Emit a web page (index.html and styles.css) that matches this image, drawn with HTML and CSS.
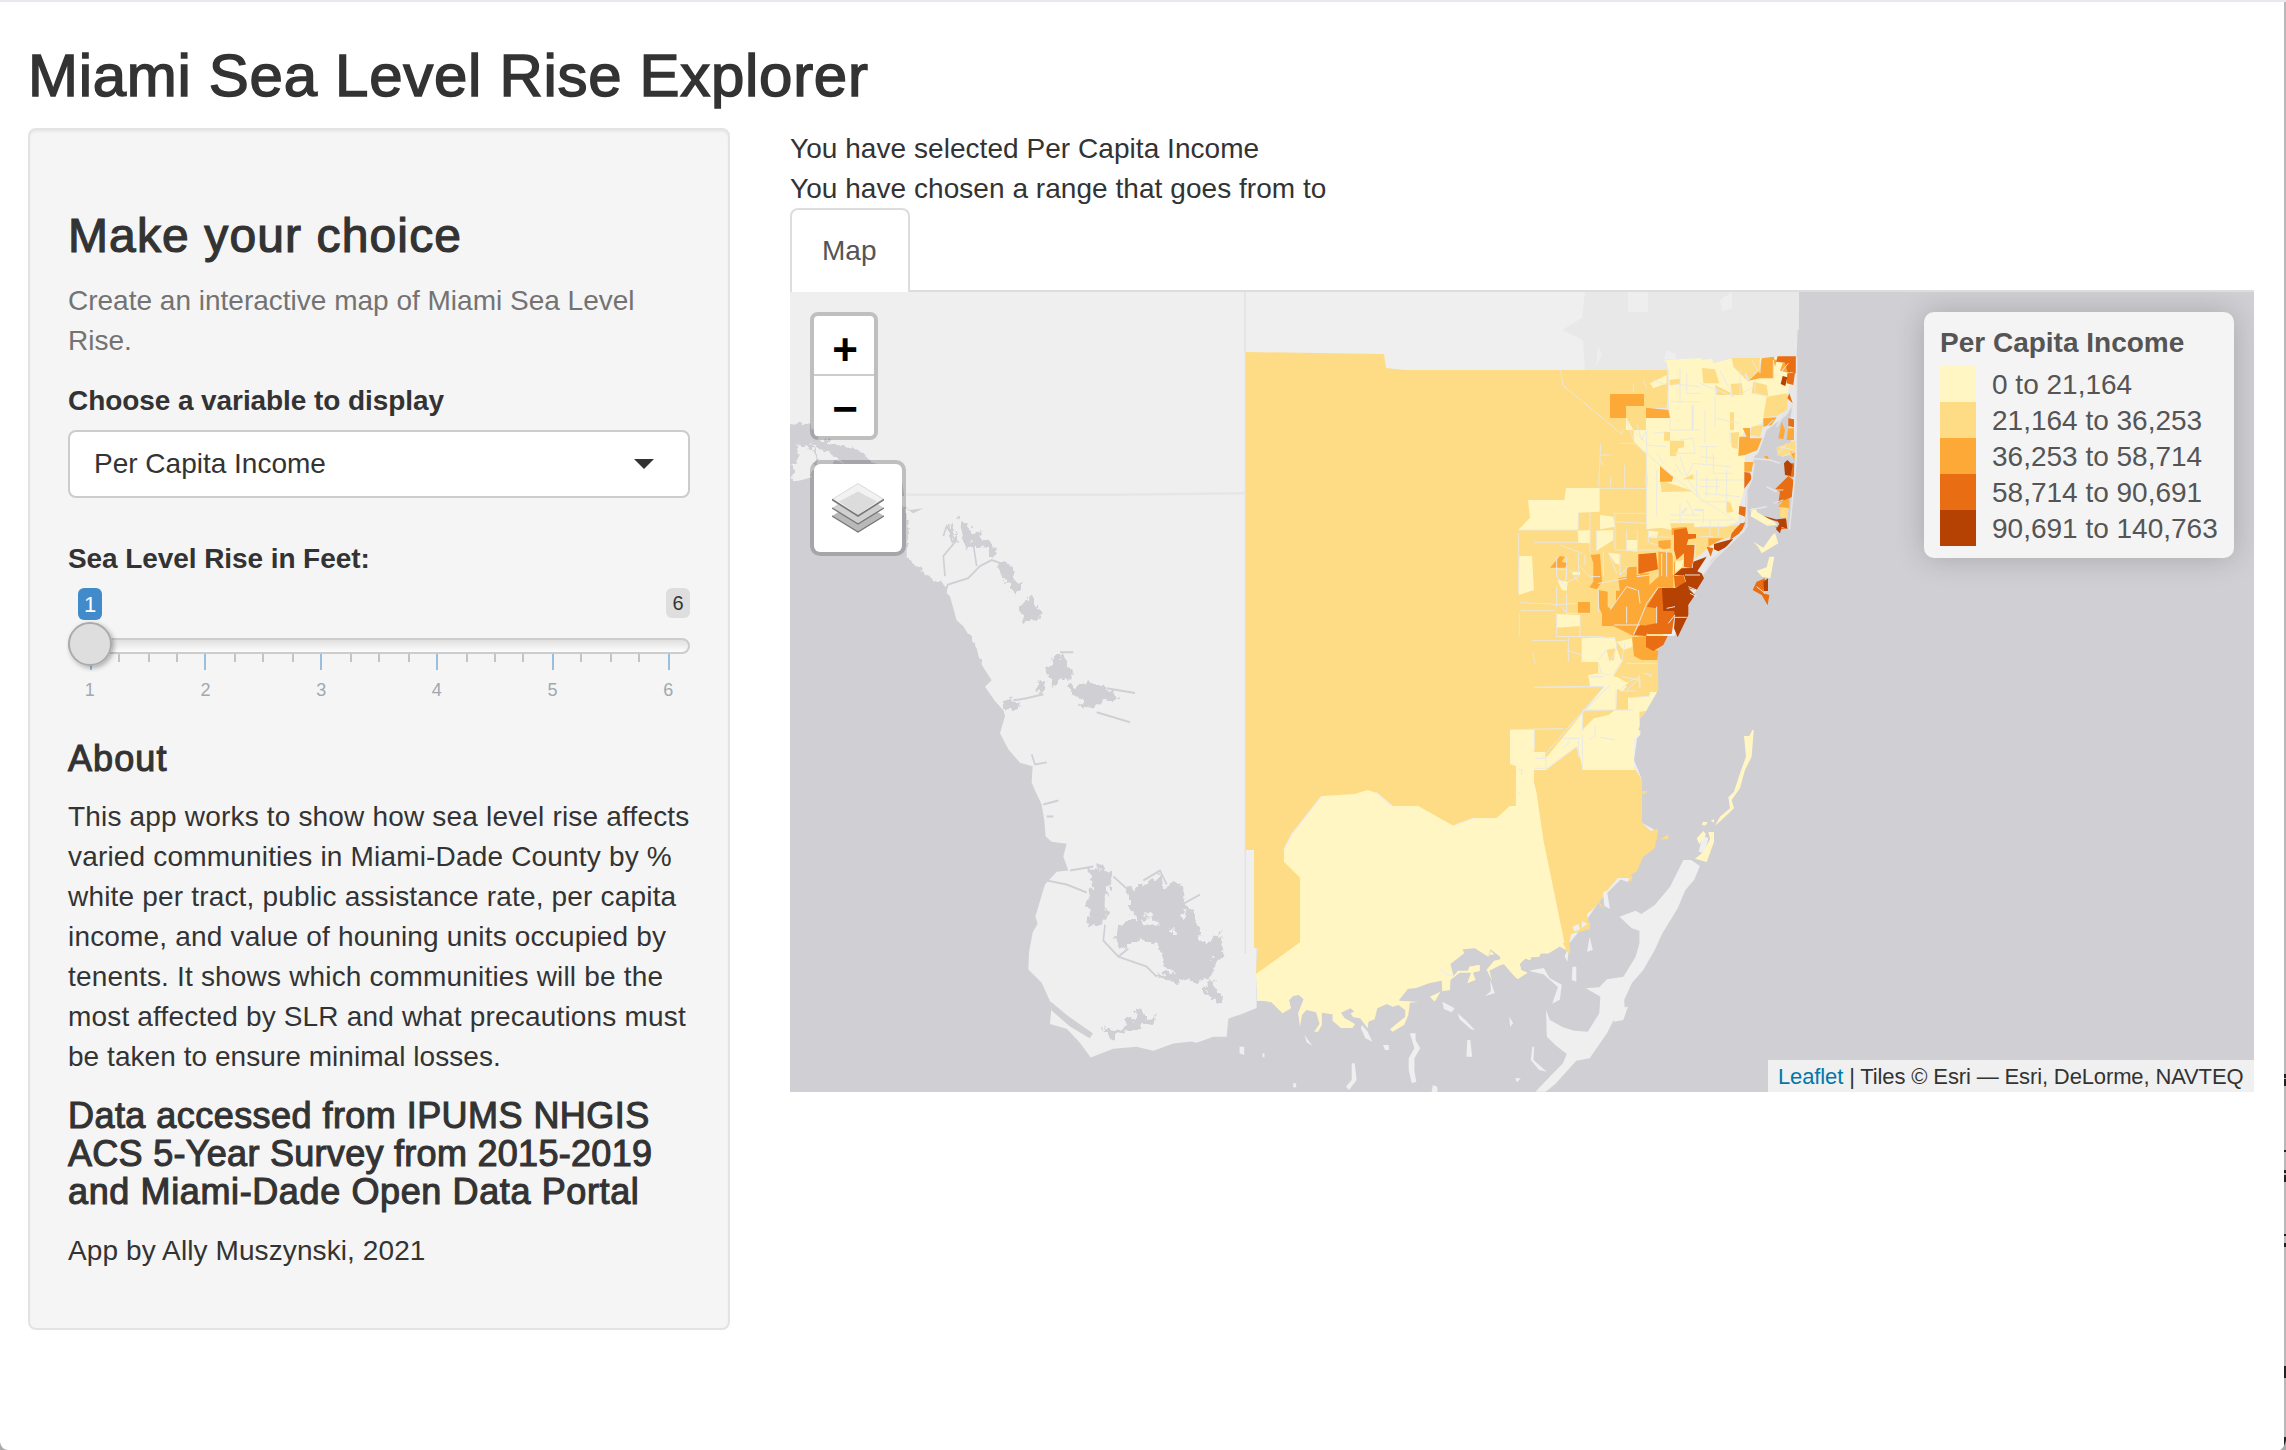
FILE: index.html
```html
<!DOCTYPE html>
<html lang="en">
<head>
<meta charset="utf-8">
<title>Miami Sea Level Rise Explorer</title>
<link rel="stylesheet" href="styles.css">
</head>
<body>
<div class="page">
  <h1 class="title">Miami Sea Level Rise Explorer</h1>
  <div class="layout">
    <aside class="sidebar">
      <h2 class="choice">Make your choice</h2>
      <p class="help">Create an interactive map of Miami Sea Level<br>Rise.</p>
      <label class="label">Choose a variable to display</label>
      <div class="select">
        <span>Per Capita Income</span>
        <svg class="caret" width="20" height="10" viewBox="0 0 20 10"><path d="M0 0H20L10 10Z"/></svg>
      </div>
      <label class="label label-slider">Sea Level Rise in Feet:</label>
      <div class="slider">
        <div class="badges"><span class="badge badge-from">1</span><span class="badge badge-max">6</span></div>
        <svg class="track" width="626" height="52" viewBox="66 620 626 52">
          <defs>
            <linearGradient id="bar" x1="0" y1="0" x2="0" y2="1"><stop offset="0" stop-color="#dedede"/><stop offset="1" stop-color="#fff"/></linearGradient>
            <filter id="knob" x="-30%" y="-30%" width="170%" height="170%"><feDropShadow dx="2" dy="2" stdDeviation="2.5" flood-opacity=".3"/></filter>
          </defs>
          <rect x="69" y="639" width="620" height="14" rx="7" fill="url(#bar)" stroke="#ccc" stroke-width="2"/>
          <path d="M119 654v8M149 654v8M177 654v8M235 654v8M263 654v8M293 654v8M351 654v8M379 654v8M409 654v8M467 654v8M495 654v8M523 654v8M581 654v8M611 654v8M639 654v8" stroke="#c4c4c4" stroke-width="2"/>
          <path d="M91 654v16M205 654v16M321 654v16M437 654v16M553 654v16M669 654v16" stroke="#98bfe0" stroke-width="2"/>
          <circle cx="90" cy="644" r="21" fill="#dedede" stroke="#ababab" stroke-width="2" filter="url(#knob)"/>
        </svg>
        <div class="ticks"><span>1</span><span>2</span><span>3</span><span>4</span><span>5</span><span>6</span></div>
      </div>
      <h4 class="about">About</h4>
      <p class="text">This app works to show how sea level rise affects<br>varied communities in Miami-Dade County by %<br>white per tract, public assistance rate, per capita<br>income, and value of houning units occupied by<br>tenents. It shows which communities will be the<br>most affected by SLR and what precautions must<br><span class="last">be taken to ensure minimal losses.</span></p>
      <h4 class="data">Data accessed from IPUMS NHGIS<br><span class="tight">ACS 5-Year Survey from 2015-2019</span><br><span class="wide">and Miami-Dade Open Data Portal</span></h4>
      <p class="credit">App by Ally Muszynski, 2021</p>
    </aside>
    <main class="main">
      <div class="line">You have selected Per Capita Income</div>
      <div class="line">You have chosen a range that goes from to</div>
      <div class="tabs"><a class="tab">Map</a></div>
      <div class="map">
        <svg class="tiles" width="1464" height="800" viewBox="790 292 1464 800">
          <defs>
            <filter id="rough" x="-5%" y="-5%" width="110%" height="110%"><feTurbulence type="fractalNoise" baseFrequency=".045" numOctaves="3" seed="4" result="n"/><feDisplacementMap in="SourceGraphic" in2="n" scale="40" xChannelSelector="R" yChannelSelector="G"/></filter>
          </defs>
          <rect x="790" y="292" width="1464" height="800" fill="#d0cfd4"/>
          <!-- mainland -->
          <path fill="#efefef" d="M790 292H1799L1797 440L1780 520L1740 560L1700 600L1657 660L1660 683L1653 705L1640 718L1634 760L1642 780V823L1655 830L1640 860L1620 880L1600 900L1580 930L1568 945L1520 950L1500 940L1450 955L1400 990L1370 1000L1340 1005L1300 1000L1272 1001H1257V500H905L900 470L870 462L850 448L820 443L810 428L790 424Z"/>
          <path fill="#e8e8e8" d="M1585 292H1799L1797 440L1780 520L1740 560L1690 605H1500V372H1585L1583 340L1562 330L1582 318Z"/>
          <path fill="#efefef" d="M1628 292h20v20h-20zM1720 300l12-8v16l-10 4zM1666 350l10 4v8h-12zM1598 345l4 10-6 12z" opacity=".8"/>
          <g transform="translate(880 480) scale(.33333 .40052)">
            <path fill="#efefef" d="M60 40H1130V1318L1080 1335L1060 1340L1045 1345L1040 1390H1000L950 1405L935 1402L880 1407L820 1425L770 1415L700 1420L632 1442L600 1405L560 1370L510 1358L515 1310L485 1255L445 1222L447 1180L458 1130L473 1108L466 1090L495 1010L530 978L565 975L550 940L560 908L515 903L497 890L493 850L485 810L465 775L455 755L458 715L420 706L385 672L360 632L375 590L370 575L345 552L315 516L335 500L300 455L290 420L250 365L230 350L210 290L170 262L120 228L60 200Z"/>
            <g fill="#d0cfd4">
              <g filter="url(#rough)">
                <path d="M240 97l20 5 5 20 30 8 20 25 30 5 10 30-25-2-30-22-30 2-20-25zM355 205l30 5 20 20-8 15 30 18-15 15-25-3-5-20-25-18zM420 320l25-28 20 15 0 15 25 15-15 15-20-8-20 8zM515 440l30-8 10 15 0 20 20 15 0 20-25-10-25 20-25-12zM475 505h15l5 20-15 15zM570 515l60-12 20 10 40 8 25 25-60 10-15 15-25-15-45-15z"/>
                <path d="M620 970h60l15 20-15 60 0 60-50 0-10-50 20-40zM740 1020l70-12 30-25 20 30 50 0 0 40 30 30 20 50 10 30 30-30 25 0 5 50-30 20 0 30-30 20-50-5-60-30-30-60-50-10-50 15-25-20 20-40 40-5-20-40zM830 1235l40-5 45 10-10 15-40-5zM980 1250l20 5 5 20 25 8-5 20-25-5-25-20z"/>
                <path d="M670 1370l50-5 40-20 10-25 25 5 0 20 30-10-5 20-50 15-50 10-25 15z"/>
                <path d="M110 225l50 25 30 20 10 60 15 20 60 50 30 60 0 20-100-90-80-120zM365 545l50 5-20 30-20-8zM200 120l10-8 20 40-10 2z"/>
              </g>
              <path d="M512 1302l50 35 77 45-10 12-60-30-55-40z"/>
              <g fill="#efefef" filter="url(#rough)"><path d="M780 1090l40 0 10 20-30 0zM870 1120l20 0 0 20-20 0zM790 1150l30 15-10 10-30-10zM900 1090l10-20 10 30z"/></g>
              <path fill="none" stroke="#d0cfd4" stroke-width="5" d="M230 150L190 190L195 240M200 262L265 245L300 215L335 200L370 210M280 160L290 215M400 550L440 545L490 535M190 140L200 115L225 150M680 520L765 532M650 580L690 590L750 605M540 430H580M455 685L465 710L500 705M490 810L535 800M500 1000L560 1010L620 1030M570 975L640 965M700 990L740 1020M660 1090L625 1115M675 1110L670 1150L715 1190L800 1215L830 1240M715 1190L745 1170M905 1060L960 1035M790 1000L840 975L860 1010M500 840H520"/>
            </g>
            <path fill="none" stroke="#e6e6e6" stroke-width="6" d="M78 37H700L1098 33"/>
          </g>
          <g transform="translate(780 120) scale(.33333)" fill="#d0cfd4">
            <path filter="url(#rough)" d="M30 915l60-5 20 45 60 20 60 10 40 30 20 60 0 50-260-45 0-60 30-40-30-10z"/>
            <path fill="#efefef" filter="url(#rough)" d="M50 975l40 10 20 40-20 60-50-10-5-40 25-10zM90 970l60 30 50 30H120z"/>
            <path d="M30 1090L100 1070L380 1180L380 1330L30 1340ZM370 1160l20 10 40-5-30 15z"/>
            <path filter="url(#rough)" d="M30 1150H370L385 1250L370 1310L400 1330L430 1370L500 1410L490 1440H30Z"/>
            <path d="M30 1150H330V1600H30Z"/>
            <path fill="none" stroke="#e3e3e3" stroke-width="5" d="M1395 516V700M1396 700V2500"/>
          </g>
          <!-- keys -->
          <g transform="translate(1230 780) scale(.38265 .33333)">
            <g fill="#efefef">
              <path d="M1185 240L1205 240L1228 258L1213 300L1190 330L1170 385L1130 460L1110 510L1080 570L1050 610L1030 660L1032 690L1005 715L985 760L940 835L905 842L850 912L825 935H798L840 885L870 850L880 822L850 795L828 770L826 690L836 720L870 742L900 752L935 755L965 700L968 650L930 625L965 622L985 598L1028 590L1060 530L1070 490L1070 452L1050 445L1018 410L1060 392L1075 402L1110 375L1150 320Z"/>
              <path d="M555 665l32 20-8 12-20-10zM345 735l15 20 12 30-18-10-12-30zM470 760l15 0 0 20 12 25-15 30 0 40 5 30-12 5-8-40 0-35 15-30zM780 572l40-8 15 30 32 20-5 45-20 12 15-50-38-38zM895 560h10v45l-12-5zM870 520l15-10-3 35zM680 600l12 40-25 8 15-15zM620 780l8 0 5 50-15 0zM730 710l10 20-8 10zM25 800h12v25l-12-5zM318 850l8 0 5 50-20 30-8-10 15-20zM790 800l5 0-2 40 35 35-20-5-22-30zM400 795h15v15h-10zM195 765l20 32-15-10zM940 470l8 40-15 5zM595 700l20 20 25 30-10-2-30-30zM1235 165l15 10-10 45-15-5zM530 915l12 5 0 16h-15zM745 895l15 0-10 12zM85 820h5v12h-5zM165 910h8v12h-8zM1000 690l40-10-12 40-25 5z"/>
            </g>
          </g>
          <!-- county base -->
          <path fill="#fddc85" d="M1246 352L1384 354L1386 368L1405 370H1634L1690 372V585L1660 640V660L1662 683L1658 693L1653 706L1640 718L1634 740V767L1642 780V823L1651 831L1657 829L1655 848L1643 857L1637 871L1627 878H1618L1605 893L1600 901L1592 910L1587 914L1590 929L1571 934L1568 952L1560 945L1300 970L1256 974L1257.5 948H1254V850H1246Z"/>
          <g transform="translate(1230 780) scale(.38265 .33333)">
            <path fill="#fff6c3" d="M747 0H793L799 28L810 130L878 510L862 500L832 521H812L808 532H788L785 542L772 536L758 552L762 570L778 578L752 598L740 585L716 553L706 556L678 572L685 602L672 572L655 560L635 578L642 600L620 610L630 578H600L576 600L575 630L555 634L553 602L520 610L485 625L465 627L442 662L495 665L470 668L466 705L455 735L425 755L418 748L458 710L458 690L440 675L425 680L410 672L385 685L378 718L362 725L360 745L340 715L322 712L315 700L325 695L315 685L290 698L300 715L327 732L320 744H290L268 722V703L240 698V735L230 755H220L234 732L225 697L200 690L188 705L183 740L178 700L192 658L180 645L165 648L155 660L160 685L137 700L108 667L72 659L68 582L183 487V293L141 245V210L162 163L240 48L325 42L360 30L382 38L423 78H492L585 138L638 114H697L731 78H747Z"/>
            <path fill="#d0cfd4" d="M576 552L612 520L608 508L640 505L675 530L680 508L706 530V538L690 542L670 570L652 572L650 555L625 560L622 572L596 572L584 588ZM442 660L465 627L490 625L552 602V634L520 655L495 665ZM155 660L165 648L180 645L192 658L180 690L160 686ZM758 552L772 536L785 542L788 532H808L812 521H832L862 500L880 515L860 560L800 562L778 576L762 570Z"/>
            <path fill="#fff6c3" d="M625 560l28-5 0 18-20 5zM675 530l6-18 10 12-12 0zM545 565l15 5-3 10zM522 650l28-15-15 30z"/>
            <path fill="none" stroke="#efefef" stroke-width="4" d="M583 138L638 114M141 210L162 163L240 48M382 38L423 78M548 565L560 580L583 588"/>
            <path fill="#efefef" d="M895 440l15-8 5 15-15 8zM920 422l14 10-15 12zM975 335l10-3 8 55-15-10zM1010 294h35l-5 12z"/>
            <path fill="#fddc85" d="M1125 178l20-15v15zM1040 290l12-3-5 22zM962 362l15 22-10-6zM870 490l15-10 5 40-8-5zM890 440l12 18-10-3zM936 425l6 5-4 25zM1078 32l14 3-14 10zM1105 155l14-10-4 40z"/>
          </g>
          <!-- southern tracts and barrier keys -->
          <g transform="translate(1480 660) scale(.33333)">
            <g fill="#fff6c3">
              <path d="M90 210L163 208L162 275H200L195 295L205 285L372 80L412 85L408 150H480L478 160L480 225L462 240V325L470 330H308L300 290L290 260L198 330H162V384L170 400L190 540L108 540V318L90 312ZM372 80L355 78H330L325 45L355 40V5H315L310 0H430L400 50L425 60L440 80L425 95L412 85ZM444 113L508 108L510 96H535L530 120L520 150L480 155L444 150Z"/>
              <path d="M792 228H808L822 200L815 290L795 330L780 385L755 420L762 445L725 480L705 497L720 470L750 445L745 412L762 395L780 340L798 290ZM668 486h15l-5 10h-12zM692 482l10-4v10zM650 535l20-22 8 10-20 30zM685 516h17v30l-22 60-35-10 25-20 20-40z"/>
            </g>
            <path fill="#fddc85" d="M308 152L405 150L385 165L342 175L306 210ZM168 210L250 206L198 290L195 275H162Z"/>
            <path fill="none" stroke="#e8e8e8" stroke-width="3" d="M90 209L250 206M164 210V270M188 292L372 80M308 150V215M310 150H390M307 225V328M198 328L290 260L300 295M408 148V90M345 198V230L330 238M360 232L405 240M165 82L370 79M355 40L395 44M400 50L440 80M425 93H470M360 70L400 58M444 114L508 109M440 90L480 55V85M490 40L515 45M162 325H198V295H165M112 328H125V345M112 400H120M245 235H300M295 240V290M270 245L250 262M480 195V225L465 240"/>
          </g>
          <!-- metro tracts -->
          <g transform="translate(1500 330) scale(.33333)">
            <path fill="#d0cfd4" d="M893 0H960V1200H415L440 1140L475 1080L473 960L500 918L535 918L565 830L610 735L640 680L720 610L735 570L738 480L755 440L762 380L780 330L800 290L860 250L885 200Z"/>
            <path fill="#e8e8e8" d="M498 88L890 76L888 390L865 300L880 220L860 255L800 300L775 370L755 385V440L735 480L732 600L640 685L600 700L440 600V260L505 180Z"/>
            <path fill="#fff6c3" d="M498 90L605 84V90L637 86L640 100L700 84L780 84L885 82L862 195L800 235L785 280L735 300L718 340L735 378L732 480L718 530L715 575L640 600L585 585L440 598L438 370L402 335L400 300H378V264H438L510 262L505 190V120Z"/>
            <path fill="#fddc85" d="M695 84H780V120L742 152L700 110ZM606 114L645 118L658 160L610 160ZM645 165L695 190L692 162L725 160L730 195L650 195ZM760 155L800 165L805 198L755 190ZM800 200L862 190V240L830 258L790 262ZM438 195H503L500 235L440 232ZM378 230H438V300H400L378 262ZM492 306H510V332H492ZM510 332H552V352L535 355L528 378H510ZM690 247H702V300H690ZM692 308L718 306L712 358L695 352ZM480 450L580 484L485 486ZM548 448L580 432V448ZM678 515L692 518L700 545L680 548ZM830 352L885 332V375L832 378ZM755 290L790 285L780 320L750 315ZM508 150L540 146V162L510 166ZM400 120H502V195L435 190L400 160Z"/>
            <path fill="#fddc85" d="M440 598L515 590L520 572L585 580V592L720 590L705 612L640 640L600 675L560 700L490 740L300 740V600ZM840 520L868 510L862 570L840 560ZM865 370h20v20z"/>
            <path fill="#fff6c3" d="M55 600L90 563L84 510H193L198 474H299V545L235 548L233 600ZM58 678H96L102 780L56 795ZM233 602L270 600V640L235 638ZM288 602L340 600V630L290 662ZM300 555L340 560L345 590L300 598ZM380 630H412V665L380 662ZM450 160L500 135V160L460 175ZM325 668L358 672L360 705L345 700ZM172 750L203 755L200 782L185 780ZM170 852L240 855V888L170 893ZM245 925L345 922L350 955L365 995L340 1035L300 1030L295 995H245ZM350 935L398 925V950L370 960ZM272 1035L350 1040L385 1060L360 1080L325 1065L275 1068ZM218 725h22v10h-22zM445 602L475 605L470 625L445 622Z"/>
            <path fill="#fff6c3" d="M515 600L580 590L700 590L580 560L450 585Z"/>
            <path fill="#fddc85" d="M590 600L715 585L690 622L630 640L590 625ZM320 960L345 955L342 990L328 992ZM510 580H582V600H515Z"/>
            <path fill="none" stroke="#e8e8e8" stroke-width="2.600" d="M440 372V590M470 420V560M302 342L296 470M300 375H335M300 390L312 408M332 440V470M374 405V475M300 476H440M182 120L188 165L365 312L370 300M358 340H402L480 405L600 505L720 580M55 600H233M56 610V790M60 818L160 822M62 842H165M58 850V920M95 932H200M98 968L105 1000M102 637H235M180 645L250 672M505 120V190M540 110V220M560 130V190H600M520 162L600 170M510 215H600M645 200V290M600 160L690 195M660 120L700 200M720 120V195L760 170M765 125V190L800 200M540 300H600M615 240V340M650 265L720 280M690 300V340M540 330L580 325L585 370H520M600 350H650M620 350V400M640 370V430H700M600 380L650 385M580 400L690 410M590 420V500M620 440V500M650 440V490M680 420V540M600 450H730M600 470H660M610 490L720 500M600 515H690M540 520V580M560 510L585 560M510 555H600M510 570H700M610 540V580M630 570V620M655 575V620M600 590H680M600 620H640M450 620L515 622M450 640L515 650M345 550V600M235 548V600M270 545V670M290 600V665M340 550H440M345 575L440 580M345 600V660H510M380 600V665M412 600V665M445 600V640M460 150L500 165M430 150L440 175M400 160V185M380 270L400 330M400 300L440 340M410 280L425 330L440 300V370M460 310L500 305M440 345L500 350M470 370L490 400M510 262V300H540M525 400L550 440M540 380L560 440L580 400M560 445L600 500"/>
            <path fill="none" stroke="#e8e8e8" stroke-width="6" d="M578 225V300M582 540h30M545 550l15-15M735 130l12 25M690 190l10 10M648 175v20M440 430v40"/>
            <path fill="#fda938" d="M330 192H432V228H378V264H330ZM438 233L505 240L510 264H438ZM780 120L785 85L822 80V145H780L745 152ZM820 85L830 92L825 110ZM790 265L830 262L815 285L790 290ZM728 294H750V325L786 325L772 360L735 375L715 378L718 320H740ZM733 396H760L755 425H733ZM480 408L520 442L515 455H480ZM845 275L855 300L850 328L835 325ZM865 295H882V330H860ZM870 365h15l-2 25zM475 632L512 630V655L490 658L475 650ZM625 625H670L625 650ZM515 595L560 590V610L515 615ZM150 713L180 678L195 680L185 695L203 700L195 713ZM272 675L300 672L306 755L290 778L268 772L280 755V700ZM234 816H270V852H234ZM295 780L323 785V830L335 838L360 790L355 745L380 740L382 712L410 710V735H420L418 730H448V765L475 740H520V775L475 772L440 830H470V882L400 918L340 888H306V852L298 835ZM348 782l20 0-20 30zM475 665L515 668L525 700V740H475ZM396 922L440 918V955L475 962L472 990H425L402 978ZM792 378h12l2 14-10-8zM848 100L870 95V130L840 122ZM850 510L868 505V535L835 530ZM700 600L735 575L725 605Z"/>
            <path fill="#e96d12" d="M833 79H888V130L862 125L855 98L828 95ZM862 130L885 128L880 165L860 160ZM868 190L878 220L862 205ZM865 265L882 268V292L865 288ZM733 426L750 428L756 445L733 476ZM718 528L738 532L735 560L716 552ZM722 580L735 578L725 605L690 630L695 610ZM825 478L865 438L880 450L878 500L835 518L840 485ZM862 400L882 400V440H870ZM522 600L560 594L565 612H588V625L565 628L560 645L585 645L580 690L575 715L552 710V670L530 690L522 660ZM415 673L468 668L474 718L415 732ZM522 738L550 735L558 760L525 772ZM486 774L525 850L520 880L515 912H442L440 885L470 880V835L440 830L475 774ZM418 885L450 888L438 918L402 916ZM438 918H503L490 945L460 963L438 952ZM620 650L640 655L632 680ZM770 755L795 745L790 790L808 795L803 826L785 795L758 780ZM825 590L835 600L860 595Z"/>
            <path fill="#b54103" d="M848 138L862 142L856 168L842 162ZM862 390L878 405L872 438L855 435L852 400ZM642 642L700 626L680 650L655 664L642 658ZM580 695L620 680L592 724L605 730L612 745L590 780L565 775L585 795L565 825V855L533 922L522 895L525 862L522 843H490L486 774H525L558 755L552 735H522L545 715L578 714ZM830 568L858 565L862 597L845 590L840 610L828 598L838 582ZM790 755L804 745V783H792ZM780 555L835 570V575L790 562Z"/>
            <path fill="#fff6c3" d="M527 695L550 690L545 712L525 725ZM755 535h12l5 12 50 28 10 10-30 2-50-28zM760 635l30 18 25-35 10-10 10 32-50 30-10-18zM770 722l30-10 8-32h15l-12 65-25-5z"/>
            <path fill="none" stroke="#e8e8e8" stroke-width="3" d="M165 715L200 720L195 755M170 680V740L200 770M200 680V750M235 670V740L205 755M210 720L235 755M240 710L270 740L300 740M255 675V705M160 825L230 820M170 770V830M185 830L200 850M200 790V850H270M295 760L380 745M295 780V845M330 840L380 770L410 780M380 830V880M342 885H420M440 916H505M400 916L420 870L440 820L475 772M415 780L420 820M470 830V880M240 855V920L345 925M170 850V920H310M205 925V995M200 960L245 975M245 980V995M295 998L305 1030M340 1035L365 995L375 940M350 955L330 995M320 960L295 990M350 935V960M380 1000H470M365 1040L420 1050M418 1035V1075M440 1030L455 1040M360 1080L385 1055L420 1040M270 1040H310M100 1072L310 1070M200 1196L330 1065M250 1140H400M310 665V740M325 668L350 730M360 670V735L385 710M410 740L450 735M485 670V738M500 665V740M520 665V735M474 720V740M585 640V690M500 835L525 830M525 862H560M565 770L590 780M570 790L590 800M555 735H600M505 880L525 855M755 90L775 125M780 90V130M820 90V150M865 100L840 130M800 290L820 270M840 350L880 360M835 370L860 340M845 380L885 365M825 480H850M820 520L850 510M770 770L795 790"/>
            <path fill="none" stroke="#e4e4e6" stroke-width="5" d="M890 80L888 400L868 600M755 385L810 390L840 400M762 400L755 450L740 480V590L720 610M735 600L640 690L612 730M875 220L880 260M860 240L830 290M800 470L830 485M750 540L800 530"/>
          </g>
        </svg>
        <div class="zoom"><span>+</span><span>−</span></div>
        <div class="layers">
          <svg width="52" height="50" viewBox="0 0 52 50">
            <path d="M0 33L26 17L52 33L26 49Z" fill="#b9b9b9"/><path d="M0 33L26 49L52 33" fill="none" stroke="#777" stroke-width="1.4"/>
            <path d="M0 25L26 8L52 25L26 41Z" fill="#d0d0d0"/><path d="M0 25L26 41L52 25" fill="none" stroke="#777" stroke-width="1.4"/>
            <path d="M0 16.500L26 .5L52 16.500L26 33Z" fill="#f2f2f2" stroke="#ccc" stroke-width=".7"/><path d="M7 18.500L26 8.500L45 18.500L26 32Z" fill="#dcdcdc"/><path d="M0 16.500L26 33L52 16.500" fill="none" stroke="#777" stroke-width="1.6"/>
          </svg>
        </div>
        <div class="legend">
          <strong>Per Capita Income</strong>
          <div class="key"><i class="c1"></i>0 to 21,164</div>
          <div class="key"><i class="c2"></i>21,164 to 36,253</div>
          <div class="key"><i class="c3"></i>36,253 to 58,714</div>
          <div class="key"><i class="c4"></i>58,714 to 90,691</div>
          <div class="key"><i class="c5"></i>90,691 to 140,763</div>
        </div>
        <div class="credits"><a>Leaflet</a> | Tiles © Esri — Esri, DeLorme, NAVTEQ</div>
      </div>
    </main>
  </div>
  <svg class="edge" width="14" height="1450" viewBox="0 0 14 1450"><path d="M13 0V1450" stroke="#b8b8b8" stroke-width="2"/><path d="M13 1072v4M13 1077v7M13 1148v2M13 1168v3M13 1173v7M13 1232v2M13 1241v4M13 1364v12M13 1435v13" stroke="#222" stroke-width="2"/><path d="M14 1438Q12 1449 2 1450H14Z" fill="#aaa"/></svg>
  <svg class="corner" width="8" height="8" viewBox="0 0 8 8"><path d="M0 0Q1 7 8 8H0Z" fill="#aaa"/></svg>
</div>
</body>
</html>
```
FILE: styles.css
```css
* { box-sizing: border-box; }
body { margin: 0; font: 28px/40px "Liberation Sans", Arial, sans-serif; color: #333; background: #fff; }
h1, h2, h4, p { margin: 0; font-weight: 400; }
svg { display: block; }

.page { position: relative; height: 1450px; padding: 41px 32px 0 28px; border-top: 2px solid #e9e8ee; overflow: hidden; }
.title { margin-bottom: 19px; font-size: 60px; line-height: 66px; letter-spacing: .7px; -webkit-text-stroke: 1.5px #333; }
.layout { display: flex; gap: 60px; align-items: flex-start; }

.sidebar { width: 702px; height: 1202px; padding: 80px 38px 0; border: 2px solid #e3e3e3; border-radius: 8px; background: #f5f5f5; box-shadow: inset 0 2px 2px rgba(0, 0, 0, .05); white-space: nowrap; }
.choice { font-size: 48px; line-height: 52px; letter-spacing: 1.12px; -webkit-text-stroke: 1.200px #333; }
.help { margin-top: 19px; color: #737373; }
.label { display: block; margin-top: 20px; font-weight: 700; letter-spacing: -.08px; }
.select { display: flex; align-items: center; justify-content: space-between; height: 68px; margin-top: 9px; padding: 0 34px 0 24px; border: 2px solid #ccc; border-radius: 8px; background: #fff; }
.select span { line-height: 42px; }
.caret { fill: #333; }
.label-slider { margin-top: 41px; }

.slider { height: 121px; padding-top: 9px; }
.badges { display: flex; justify-content: space-between; align-items: flex-start; height: 32px; padding-left: 10px; }
.badge { width: 24px; border-radius: 6px; text-align: center; }
.badge-from { height: 32px; font-size: 22px; line-height: 33px; color: #fff; background: #428bca; }
.badge-max { height: 30px; font-size: 20px; line-height: 30px; background: #dedede; }
.track { margin: 0 -2px; }
.ticks { display: grid; grid-template-columns: repeat(6, 1fr); margin: 8px -36px 0; font-size: 18px; line-height: 20px; text-align: center; color: #9fa9b0; }

.about { margin-top: 39px; font-size: 36px; line-height: 40px; letter-spacing: 1.1px; -webkit-text-stroke: 1.100px #333; }
.text { margin-top: 18px; letter-spacing: .18px; }
.last { letter-spacing: .05px; }
.data { margin-top: 20px; font-size: 36px; line-height: 38px; letter-spacing: .45px; -webkit-text-stroke: 1.100px #333; }
.tight { letter-spacing: .29px; }
.wide { letter-spacing: .62px; }
.credit { margin-top: 20px; letter-spacing: .1px; }

.main { width: 1464px; padding-top: 1px; }
.line { letter-spacing: .05px; }
.tabs { display: flex; height: 84px; margin-top: -1px; border-bottom: 2px solid #ddd; }
.tab { width: 120px; height: 84px; padding: 21px 0 0 30px; border: 2px solid #ddd; border-bottom: 0; border-radius: 8px 8px 0 0; color: #555; background: #fff; }

.map { position: relative; height: 800px; overflow: hidden; }
.zoom, .layers { position: absolute; left: 20px; border: 4px solid rgba(0, 0, 0, .2); background: #fff; background-clip: padding-box; }
.zoom { top: 20px; width: 68px; height: 128px; border-radius: 8px; }
.zoom span { display: block; height: 58px; font-size: 44px; line-height: 68px; font-weight: 700; text-align: center; color: #000; padding-left: 2px; }
.zoom span + span { height: 62px; border-top: 2px solid #ccc; line-height: 66px; }
.layers { display: grid; place-items: center; top: 168px; width: 96px; height: 96px; border-radius: 10px; }
.legend { position: absolute; top: 20px; right: 20px; width: 310px; height: 246px; padding: 12px 16px; border-radius: 10px; color: #555; background: #f4f4f4; box-shadow: 0 0 30px rgba(0, 0, 0, .2); line-height: 38px; white-space: nowrap; }
.legend strong { display: block; height: 42px; }
.key { display: flex; height: 36px; }
.key i { width: 36px; height: 36px; margin-right: 16px; }
.c1 { background: #fff6c3; }
.c2 { background: #fddc85; }
.c3 { background: #fda938; }
.c4 { background: #e96d12; }
.c5 { background: #b54103; }
.credits { position: absolute; right: 0; bottom: 0; width: 486px; height: 32px; padding-left: 10px; font-size: 22px; line-height: 34px; letter-spacing: -.13px; background: #f0f0f1; white-space: nowrap; }
.credits a { color: #0078a8; }
.edge { position: absolute; right: 0; top: 0; }
.corner { position: absolute; left: 0; bottom: 0; }
```
